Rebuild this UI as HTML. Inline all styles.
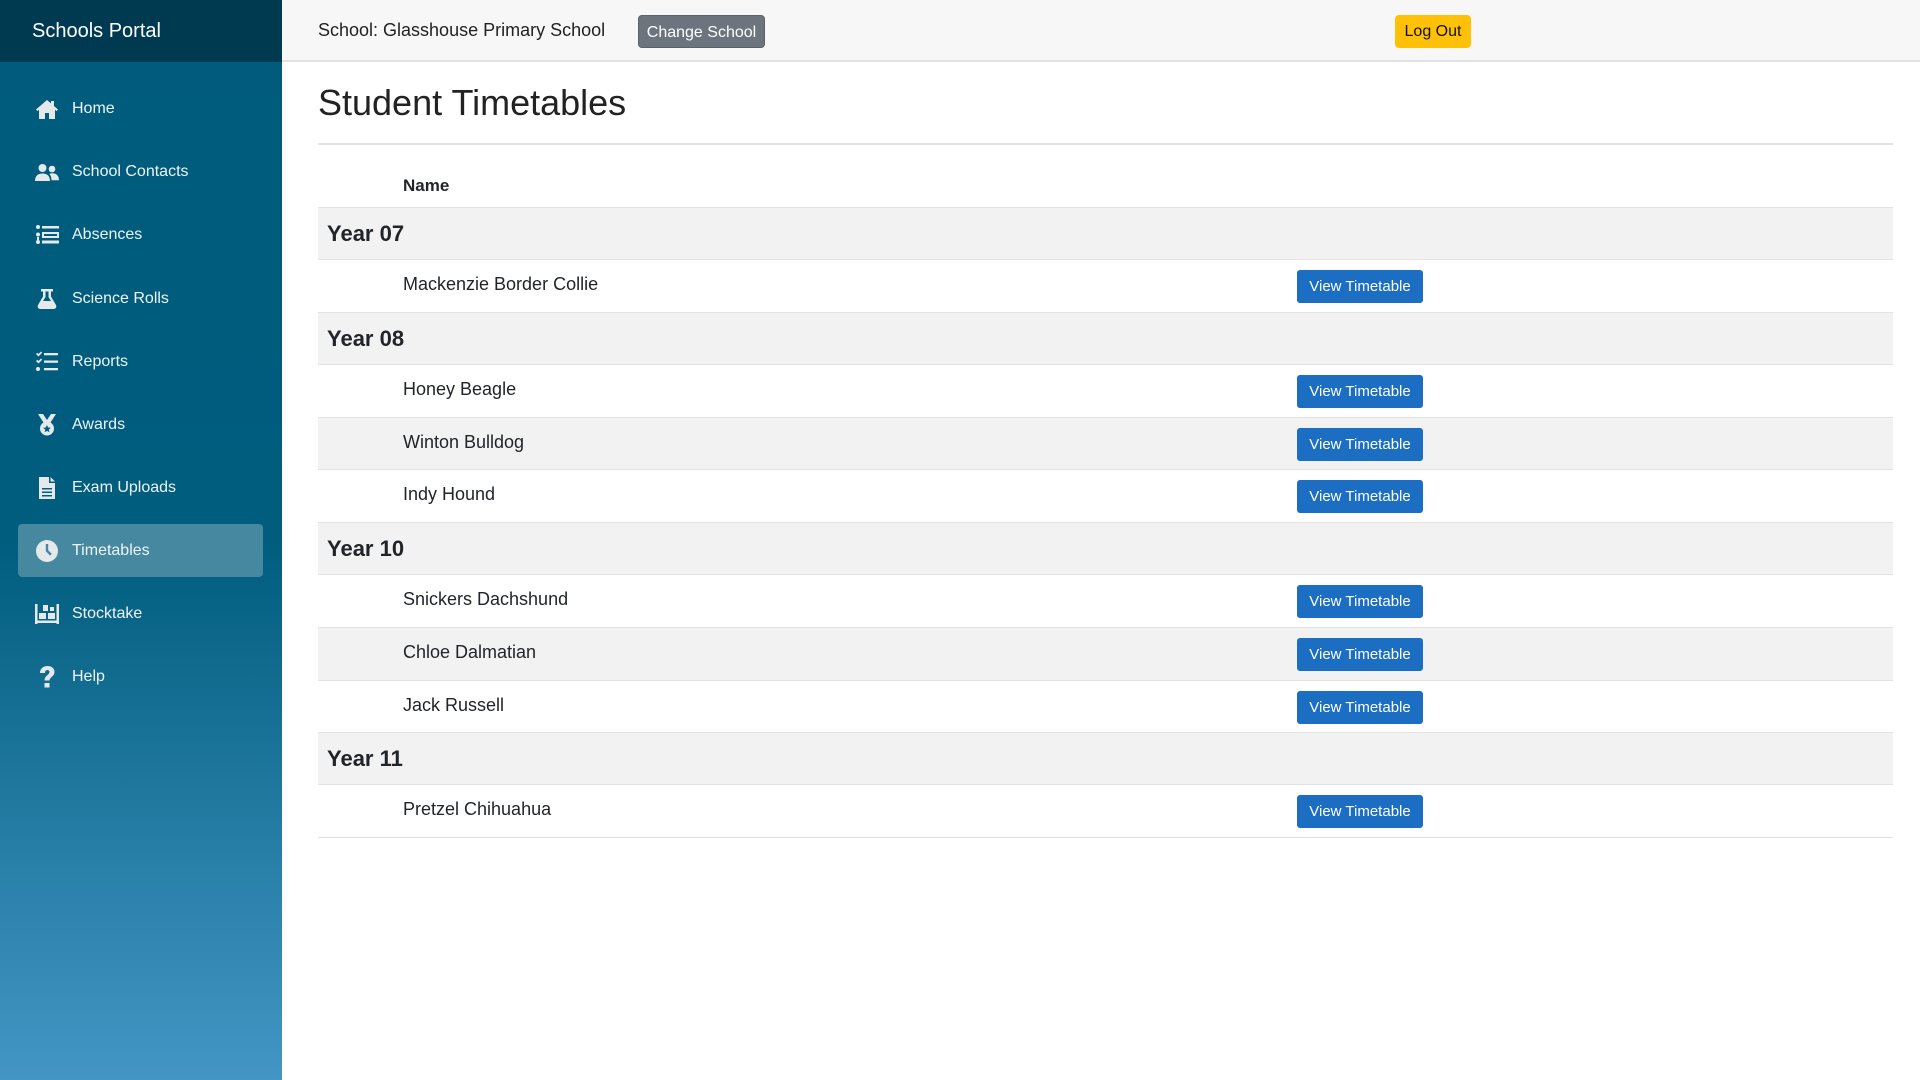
<!DOCTYPE html>
<html><head><meta charset="utf-8"><style>
*{box-sizing:border-box;margin:0;padding:0}
body{width:1920px;height:1080px;font-family:"Liberation Sans",Arial,sans-serif;background:#fff;position:relative;overflow:hidden;color:#212529}
#side{position:absolute;left:0;top:0;width:282px;height:1080px;background:linear-gradient(#005b7c 0%,#005d7e 50%,#4396c4 100%)}
#brand{height:62px;background:#003a50;color:#fff;font-size:20px;line-height:62px;padding-left:32px}
.nav{position:absolute;left:18px;width:245px;height:53px;color:#eef4f7;font-size:16px;line-height:53px;padding-left:54px;border-radius:4px}
.nav svg{position:absolute;left:17px;top:15px;width:24px;height:24px;fill:#e6e9eb}
.nav.act{background:#45889f}
#top{position:absolute;left:282px;top:0;right:0;height:62px;background:#f7f7f7;border-bottom:2px solid #e2e2e2}
.btn{position:absolute;border-radius:4px;font-size:16px;text-align:center;line-height:33px;height:33px}
h1{position:absolute;left:318px;top:82px;font-size:36px;font-weight:normal;color:#222}
#hr{position:absolute;left:318px;top:143px;width:1575px;height:2px;background:#e2e2e2}
#tbl{position:absolute;left:318px;top:162px;width:1575px}
.r{position:relative;border-bottom:1px solid #e2e2e2;font-size:18px}
.g{background:#f2f2f2;font-weight:bold;font-size:22px;padding-left:9px}
.s .n{position:absolute;left:85px;top:14px}
.s.z{background:#f2f2f2}
.vb{position:absolute;left:979px;top:10px;width:126px;height:33px;background:#1b6ec2;color:#fff;border-radius:3px;font-size:15px;text-align:center;line-height:33px}
</style></head><body>
<div id="side">
<div id="brand">Schools Portal</div>
<div class="nav" style="top:82px"><svg viewBox="0 0 24 24"><path d="M12 3L1 12.5l1.5 1.6L4 12.8V22h6v-6h4v6h6v-9.2l1.5 1.3 1.5-1.6L19 9V4h-3v2.4z"/></svg>Home</div>
<div class="nav" style="top:145px"><svg viewBox="0 0 24 24"><circle cx="7.5" cy="8" r="4"/><circle cx="17" cy="9" r="3.3"/><path d="M0 21c0-5 3-7.5 7.5-7.5S15 16 15 21zM14.5 14c1-.6 1.8-.8 2.5-.8 4 0 7 2 7 7h-7.5c0-2.5-.7-4.6-2-6.2z"/></svg>School Contacts</div>
<div class="nav" style="top:208px"><svg viewBox="0 0 24 24"><circle cx="3" cy="4" r="2"/><circle cx="3" cy="11.5" r="2"/><circle cx="3" cy="19" r="2"/><rect x="2" y="14" width="2" height="3"/><rect x="7" y="3" width="17" height="2.5"/><path d="M7 9h17v6H7zM9 11v2h13v-2z"/><rect x="7" y="17.5" width="17" height="3"/></svg>Absences</div>
<div class="nav" style="top:272px"><svg viewBox="0 0 24 24"><path d="M6 2h12v2.5h-2v5l5 8.5c1 2.5-.5 4-2.5 4h-13C3.5 22 2 20.5 3 18l5-8.5v-5H6zM10.5 4.5v5.6L8 14h8l-2.5-3.9V4.5z"/></svg>Science Rolls</div>
<div class="nav" style="top:335px"><svg viewBox="0 0 24 24"><path d="M1 4l1.3-1.2 1.2 1.2L6 1.5l1.2 1.2L3.5 6.5zM1 11l1.3-1.2 1.2 1.2L6 8.5l1.2 1.2-3.7 3.8z"/><circle cx="3" cy="19" r="2"/><rect x="9" y="3" width="14" height="2.3"/><rect x="9" y="10.5" width="14" height="2.3"/><rect x="9" y="18" width="14" height="2.3"/></svg>Reports</div>
<div class="nav" style="top:398px"><svg viewBox="0 0 24 24"><path d="M3 1h5l4 6 4-6h5l-5.5 8.5A7 7 0 1 1 8.5 9.5z"/><path fill="#005d7e" d="M12 12l1.2 2.5 2.6.3-2 1.8.6 2.6-2.4-1.3-2.4 1.3.6-2.6-2-1.8 2.6-.3z"/></svg>Awards</div>
<div class="nav" style="top:461px"><svg viewBox="0 0 24 24"><path d="M4 1h10v6h6v16H4zM15.5 1l4.5 4.5h-4.5zM7 12v1.5h10V12zm0 3.5V17h10v-1.5zm0 3.5v1.5h10V19z"/></svg>Exam Uploads</div>
<div class="nav act" style="top:524px"><svg viewBox="0 0 24 24"><circle cx="12" cy="12" r="11"/><path fill="#45889f" d="M10.8 5h2.4v6.3l3.6 3.6-1.7 1.7-4.3-4.3z"/></svg>Timetables</div>
<div class="nav" style="top:587px"><svg viewBox="0 0 24 24"><path d="M0 2h2.5v20H0zM21.5 2H24v20h-2.5zM2.5 18.5h19V21h-19zM4 11h7v6H4zM13 11h7v6h-7zM8 3h5v6H8zM15 5h4v4h-4z"/></svg>Stocktake</div>
<div class="nav" style="top:650px"><svg viewBox="0 0 24 24"><path d="M5 8c0-4.5 3.5-7 7.5-7 4.5 0 7 2.5 7 6 0 4.5-5 5-5 8.5h-5c0-5 5-5.5 5-8.5 0-1.3-1-2-2.2-2-1.5 0-2.3 1-2.3 3zM9.5 18h5v4.5h-5z"/></svg>Help</div>
</div>
<div id="top">
<div style="position:absolute;left:36px;top:0;line-height:60px;font-size:18px;color:#222">School: Glasshouse Primary School</div>
<div class="btn" style="left:356px;top:15px;width:127px;background:#6c757d;color:#fff;border:1px solid #5a6268">Change School</div>
<div class="btn" style="left:1113px;top:15px;width:76px;background:#ffc107;color:#111">Log Out</div>
</div>
<h1>Student Timetables</h1>
<div id="hr"></div>
<div id="tbl">
<div class="r" style="height:46px;border-bottom:1px solid #e2e2e2"><b style="position:absolute;left:85px;top:14px;font-size:17px">Name</b></div>
<div class="r g" style="height:52px;line-height:52px">Year 07</div>
<div class="r s" style="height:53px"><span class="n">Mackenzie Border Collie</span><div class="vb">View Timetable</div></div>
<div class="r g" style="height:52px;line-height:52px">Year 08</div>
<div class="r s" style="height:53px"><span class="n">Honey Beagle</span><div class="vb">View Timetable</div></div>
<div class="r s z" style="height:52px"><span class="n">Winton Bulldog</span><div class="vb">View Timetable</div></div>
<div class="r s" style="height:53px"><span class="n">Indy Hound</span><div class="vb">View Timetable</div></div>
<div class="r g" style="height:52px;line-height:52px">Year 10</div>
<div class="r s" style="height:53px"><span class="n">Snickers Dachshund</span><div class="vb">View Timetable</div></div>
<div class="r s z" style="height:53px"><span class="n">Chloe Dalmatian</span><div class="vb">View Timetable</div></div>
<div class="r s" style="height:52px"><span class="n">Jack Russell</span><div class="vb">View Timetable</div></div>
<div class="r g" style="height:52px;line-height:52px">Year 11</div>
<div class="r s" style="height:53px"><span class="n">Pretzel Chihuahua</span><div class="vb">View Timetable</div></div>
</div>
</body></html>
